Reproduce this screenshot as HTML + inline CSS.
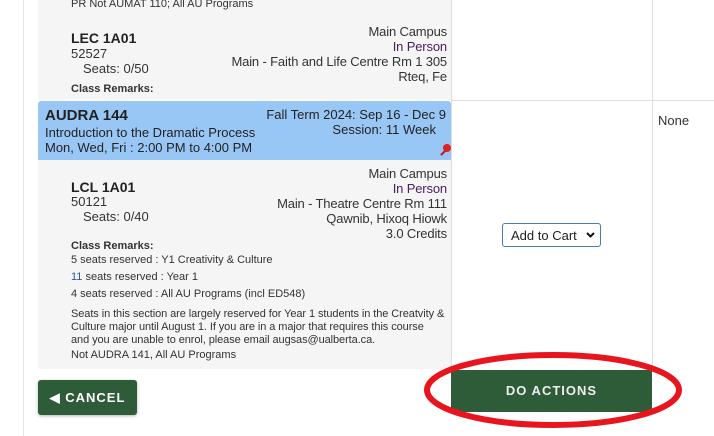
<!DOCTYPE html>
<html><head><style>
body{margin:0;width:714px;height:436px;overflow:hidden;background:#fff;font-family:"Liberation Sans",Arial,sans-serif;color:#333;position:relative}
.a{position:absolute;white-space:nowrap}
.r{text-align:right;right:267px}
.s13{font-size:13px}
.s11{font-size:11px}
</style></head><body>
<div class="a" style="left:23px;top:0;width:1px;height:436px;background:#e6e6e6"></div>
<div class="a" style="left:451px;top:0;width:1px;height:370px;background:#ddd"></div>
<div class="a" style="left:652px;top:0;width:1px;height:370px;background:#ddd"></div>
<div class="a" style="left:451px;top:100px;width:263px;height:1px;background:#ddd"></div>
<div class="a" style="left:38px;top:0;width:413px;height:100px;background:#f5f5f5"></div>
<div class="a s11" style="left:71px;top:-2px">PR Not AUMAT 110; All AU Programs</div>
<div class="a" style="left:71px;top:30px;font-size:14px;font-weight:bold;color:#222">LEC 1A01</div>
<div class="a s13" style="left:71px;top:46px">52527</div>
<div class="a s13" style="left:83px;top:61px">Seats: 0/50</div>
<div class="a" style="left:71px;top:83px;font-size:11px;font-weight:bold">Class Remarks:</div>
<div class="a s13 r" style="top:24px;line-height:15px;letter-spacing:-0.15px">Main Campus<br><span style="color:#4a2060">In Person</span><br>Main - Faith and Life Centre Rm 1 305<br>Rteq, Fe</div>
<div class="a" style="left:38px;top:101px;width:413px;height:59px;background:#99c7f5;border-radius:3px 3px 0 0"></div>
<div class="a" style="left:45px;top:107px;font-size:15px;font-weight:bold;color:#222">AUDRA 144</div>
<div class="a s13" style="left:45px;top:125px;color:#222">Introduction to the Dramatic Process</div>
<div class="a s13" style="left:45px;top:140px;color:#222">Mon, Wed, Fri : 2:00 PM to 4:00 PM</div>
<div class="a s13" style="right:268px;top:107px;color:#222">Fall Term 2024: Sep 16 - Dec 9</div>
<div class="a s13" style="right:278px;top:122px;color:#222">Session: 11 Week</div>
<div class="a" style="left:443px;top:144px;width:8px;height:8px;border-radius:50%;background:#d22"></div>
<div class="a" style="left:440px;top:152px;width:6px;height:2px;background:#a22;transform:rotate(-45deg)"></div>
<div class="a" style="left:38px;top:160px;width:413px;height:209px;background:#f5f5f5;border-radius:0 0 4px 4px"></div>
<div class="a" style="left:71px;top:179px;font-size:14px;font-weight:bold;color:#222">LCL 1A01</div>
<div class="a s13" style="left:71px;top:194px">50121</div>
<div class="a s13" style="left:83px;top:209px">Seats: 0/40</div>
<div class="a s13 r" style="top:166px;line-height:15px;letter-spacing:-0.15px">Main Campus<br><span style="color:#4a2060">In Person</span><br>Main - Theatre Centre Rm 111<br>Qawnib, Hixoq Hiowk<br>3.0 Credits</div>
<div class="a" style="left:71px;top:240px;font-size:11px;font-weight:bold">Class Remarks:</div>
<div class="a s11" style="left:71px;top:254px">5 seats reserved : Y1 Creativity &amp; Culture</div>
<div class="a s11" style="left:71px;top:271px"><span style="color:#2a5aa0">11</span> seats reserved : Year 1</div>
<div class="a s11" style="left:71px;top:288px">4 seats reserved : All AU Programs (incl ED548)</div>
<div class="a s11" style="left:71px;top:308px;line-height:13px;letter-spacing:-0.08px">Seats in this section are largely reserved for Year 1 students in the Creatvity &amp;<br>Culture major until August 1. If you are in a major that requires this course<br>and you are unable to enrol, please email augsas@ualberta.ca.</div>
<div class="a s11" style="left:71px;top:349px">Not AUDRA 141, All AU Programs</div>
<div class="a s13" style="left:658px;top:113px">None</div>
<div class="a" style="left:502px;top:223px;width:99px;height:24px;border:1px solid #4a7ab0;border-radius:3px;box-sizing:border-box;font-size:13px;color:#222;padding:4px 0 0 8px;background:#fff">Add to Cart
<svg style="position:absolute;right:5px;top:8px" width="9" height="6"><path d="M1 1L4.5 4.5L8 1" fill="none" stroke="#111" stroke-width="2"/></svg></div>
<div class="a" style="left:38px;top:380px;width:99px;height:35px;background:#2e5b38;border-radius:3px;box-shadow:0 1px 3px rgba(0,0,0,.3);color:#fff;font-weight:bold;font-size:13px;letter-spacing:1px;line-height:35px;text-align:center">&#9664; CANCEL</div>
<div class="a" style="left:451px;top:370px;width:201px;height:42px;background:#2e5b38;color:#eee;font-weight:bold;font-size:13px;letter-spacing:1px;line-height:42px;text-align:center">DO ACTIONS</div>
<svg class="a" style="left:0;top:0" width="714" height="436"><ellipse cx="553" cy="390" rx="126" ry="35" fill="none" stroke="#e8151f" stroke-width="6"/></svg>
</body></html>
